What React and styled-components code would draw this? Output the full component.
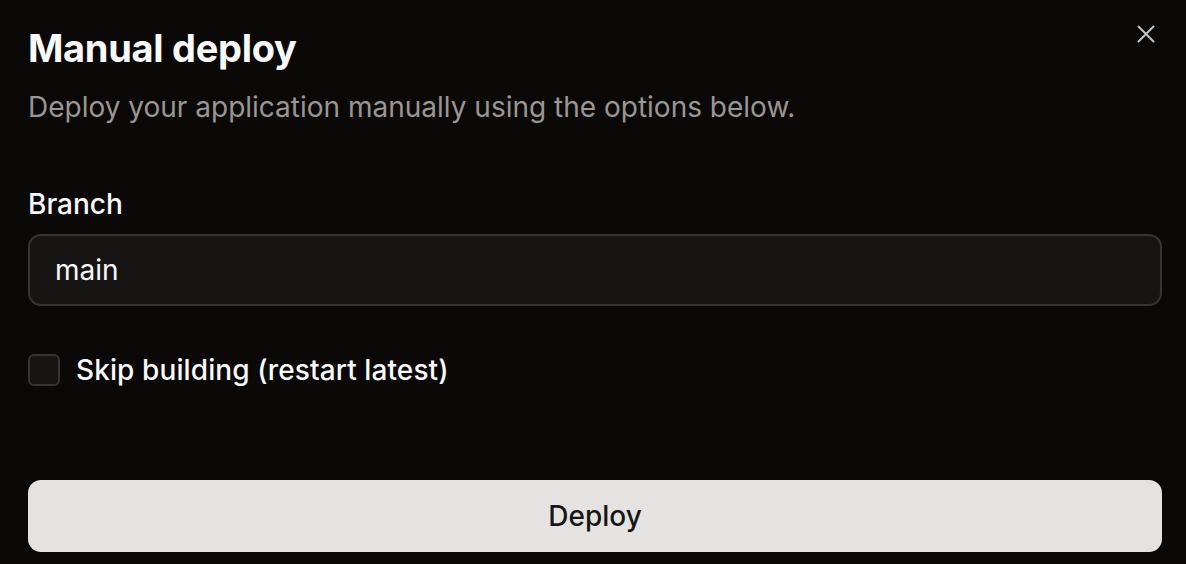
import React from 'react';
import styled, { createGlobalStyle } from 'styled-components';

const Global = createGlobalStyle`
  html, body {
    margin: 0;
    padding: 0;
    background: #0a0908;
  }
  body {
    font-family: Inter, "Noto Sans", sans-serif;
    -webkit-font-smoothing: antialiased;
  }
`;

const Dialog = styled.div`
  position: relative;
  box-sizing: border-box;
  width: 1186px;
  height: 564px;
  padding: 24px 24px 0 28px;
  background: #0a0908;
  color: #fff;
`;

const Title = styled.h2`
  margin: 0;
  font-size: 38px;
  font-weight: 700;
  letter-spacing: -0.3px;
  line-height: 48px;
  color: #fafafa;
`;

const Subtitle = styled.p`
  margin: 15px 0 0;
  font-size: 28px;
  line-height: 40px;
  color: #9b9692;
`;

const Close = styled.button`
  position: absolute;
  top: 22px;
  right: 28px;
  width: 24px;
  height: 24px;
  padding: 0;
  border: 0;
  background: transparent;
  color: #c2c2c2;
  display: flex;
  align-items: center;
  justify-content: center;
`;

const Field = styled.div`
  margin-top: 57px;
  display: flex;
  flex-direction: column;
  gap: 10px;
`;

const Label = styled.label`
  font-size: 28px;
  font-weight: 500;
  line-height: 40px;
  color: #fafafa;
`;

const Input = styled.input`
  box-sizing: border-box;
  width: 100%;
  height: 72px;
  padding: 0 25px;
  border: 2px solid #363534;
  border-radius: 13px;
  background: #161514;
  color: #fafafa;
  font-family: inherit;
  font-size: 28px;
  outline: none;
`;

const CheckRow = styled.label`
  margin-top: 44px;
  display: flex;
  align-items: center;
  gap: 16px;
  font-size: 28px;
  font-weight: 500;
  letter-spacing: 0.1px;
  line-height: 40px;
  color: #fafafa;
`;

const Box = styled.span`
  box-sizing: border-box;
  width: 32px;
  height: 32px;
  border: 2px solid #363534;
  border-radius: 6px;
  background: #161514;
`;

const Button = styled.button`
  margin-top: 90px;
  box-sizing: border-box;
  width: 100%;
  height: 72px;
  border: 0;
  border-radius: 13px;
  background: #e4e3e1;
  color: #171615;
  font-family: inherit;
  font-size: 28px;
  font-weight: 500;
`;

export default function App() {
  return (
    <>
      <Global />
      <Dialog>
        <Title>Manual deploy</Title>
        <Subtitle>Deploy your application manually using the options below.</Subtitle>
        <Close aria-label="Close">
          <svg width="20" height="20" viewBox="0 0 24 24" fill="none" stroke="currentColor" strokeWidth="2.4" strokeLinecap="round">
            <path d="M3 3l18 18M21 3L3 21" />
          </svg>
        </Close>
        <Field>
          <Label>Branch</Label>
          <Input defaultValue="main" />
        </Field>
        <CheckRow>
          <Box />
          Skip building (restart latest)
        </CheckRow>
        <Button>Deploy</Button>
      </Dialog>
    </>
  );
}
